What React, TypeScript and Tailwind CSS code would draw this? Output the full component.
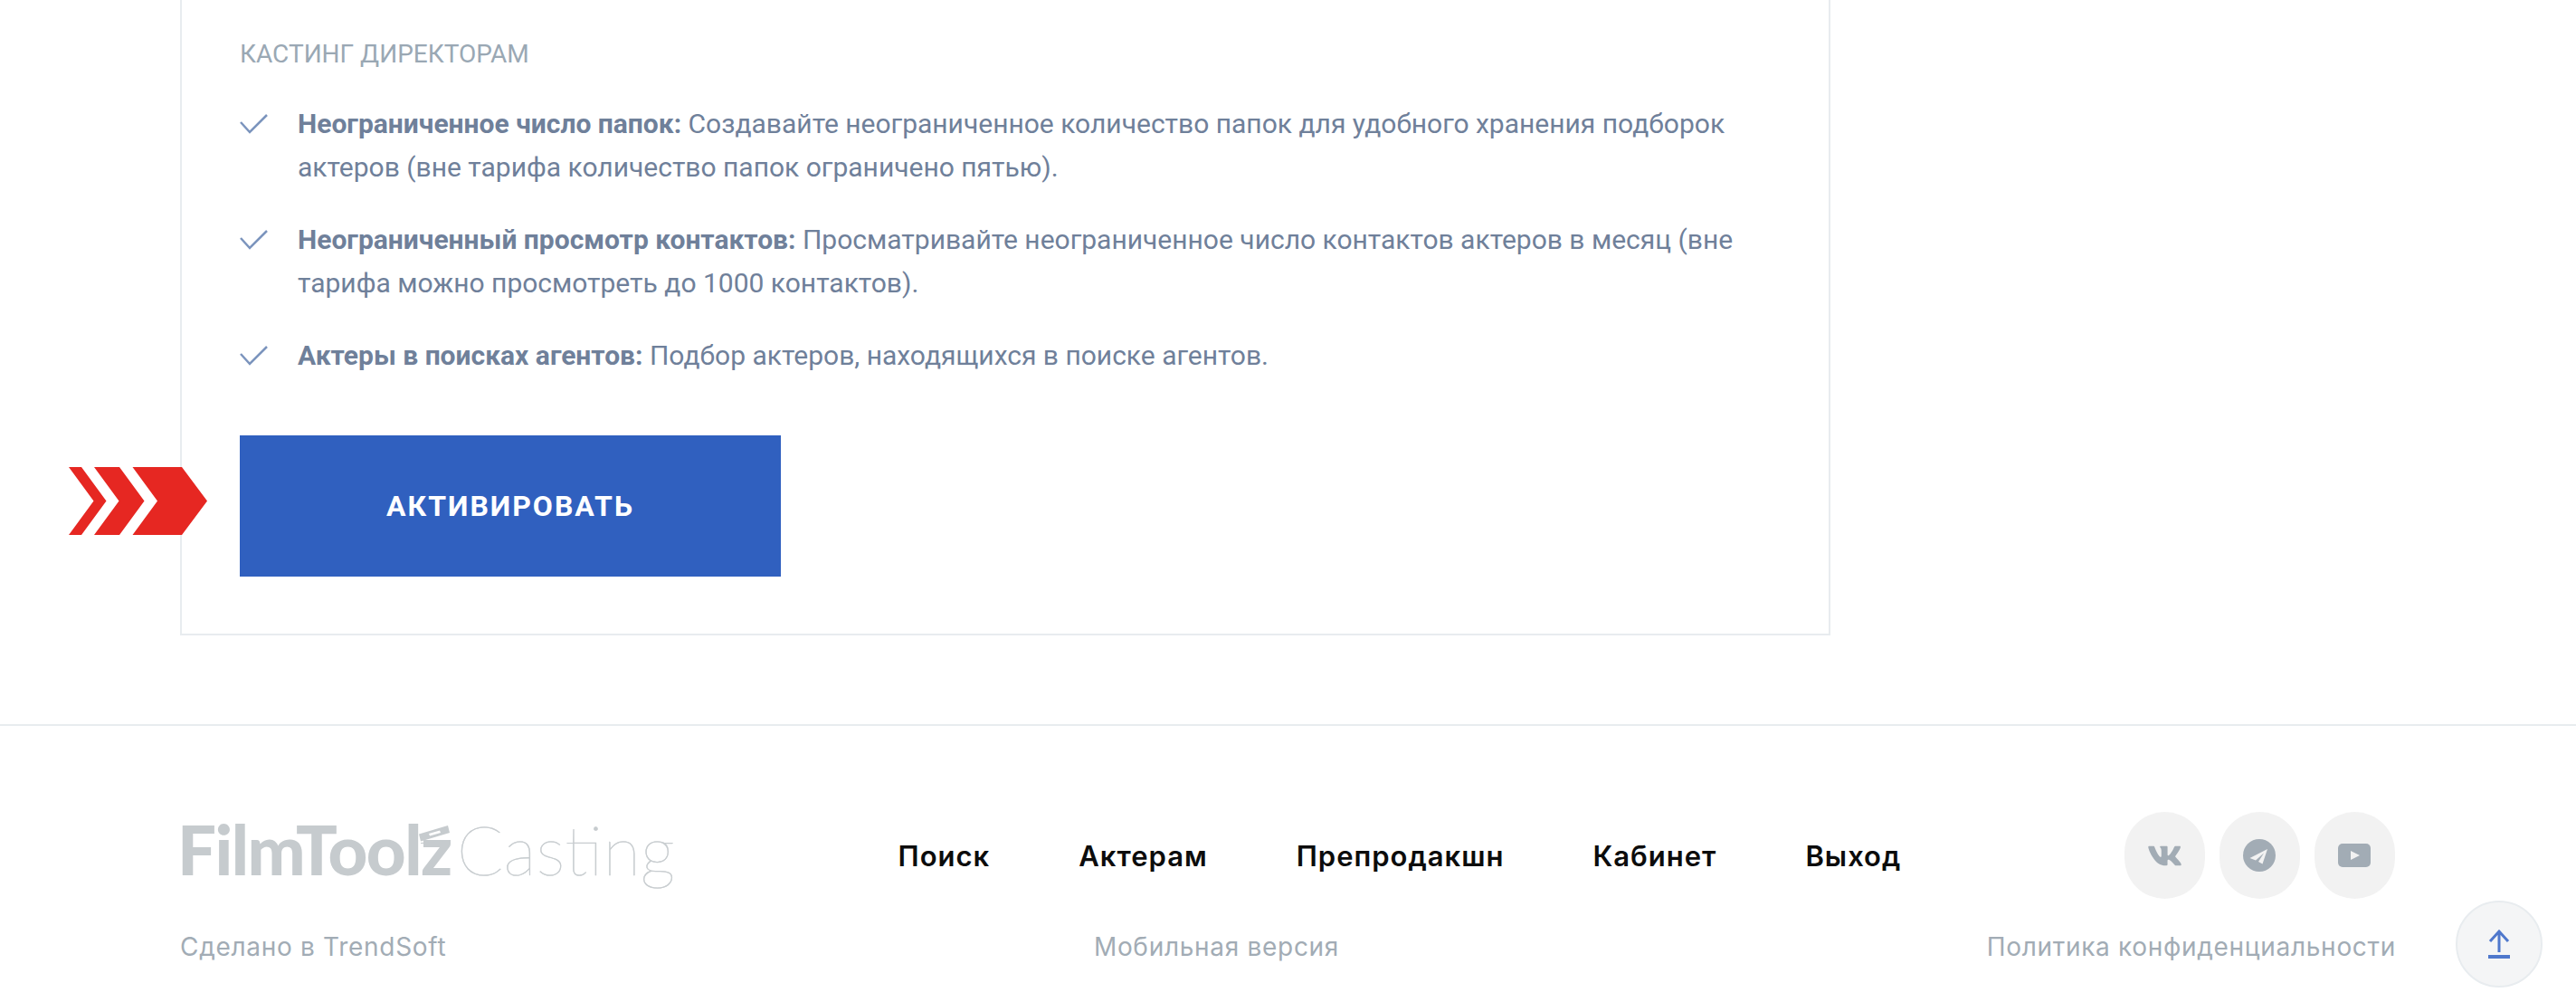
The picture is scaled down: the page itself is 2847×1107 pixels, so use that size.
import { FaVk } from "react-icons/fa";

const perks = [
  {
    title: "Неограниченное число папок:",
    text: " Создавайте неограниченное количество папок для удобного хранения подборок актеров (вне тарифа количество папок ограничено пятью).",
  },
  {
    title: "Неограниченный просмотр контактов:",
    text: " Просматривайте неограниченное число контактов актеров в месяц (вне тарифа можно просмотреть до 1000 контактов).",
  },
  {
    title: "Актеры в поисках агентов:",
    text: " Подбор актеров, находящихся в поиске агентов.",
  },
];

const navLinks = ["Поиск", "Актерам", "Препродакшн", "Кабинет", "Выход"];

function CheckMark() {
  return (
    <svg width="31" height="22" viewBox="0 0 31 22" fill="none" className="absolute left-[-64px] top-[13px]">
      <path d="M1 9L11 20L30 1" stroke="#7b94bd" strokeWidth="2.5" />
    </svg>
  );
}

function Chevrons() {
  return (
    <svg width="153" height="75" viewBox="0 0 153 75" className="absolute left-[-189px] top-[35px]">
      <path d="M0 0H14L41.5 37.5L14 75H0L27.5 37.5Z" fill="#e62722" />
      <path d="M28 0H56L83.5 37.5L56 75H28L55.5 37.5Z" fill="#e62722" />
      <path d="M70.5 0H125L153 37.5L125 75H70.5L98 37.5Z" fill="#e62722" />
    </svg>
  );
}

function Logo() {
  return (
    <div className="relative -mt-[14px] flex h-[72px] items-start text-[#c6cbce]">
      <span className="-ml-[3px] font-['Lato'] text-[76px] leading-[72px] font-black tracking-[-1.5px]">FilmToolz</span>
      <span className="ml-[6px] font-['Lato'] text-[76px] leading-[72px] font-thin [-webkit-text-stroke:0.5px_#c6cbce]">
        Casting
      </span>
      {/* хлопушка над z */}
      <svg width="38" height="20" viewBox="0 0 38 20" className="absolute left-[264px] top-[10px]">
        <path d="M0 9.5L32 0L34 8L2 17.5Z" fill="#c6cbce" />
        <path d="M11 9L23 5.5L24 8L12 11.5Z" fill="#ffffff" />
        <path d="M2 19L34 17V20H2Z" fill="#c6cbce" />
      </svg>
    </div>
  );
}

function Social({ children }: { children: React.ReactNode }) {
  return (
    <div className="flex h-[96px] w-[89px] items-center justify-center rounded-full bg-[#f2f2f2] text-[#a2acb5]">
      {children}
    </div>
  );
}

export default function App() {
  return (
    <div className="h-[1107px] overflow-hidden bg-white font-['Roboto',sans-serif]">
      <div className="px-[199px]">
        <div className="h-[702px] w-[1824px] border-x-2 border-b-2 border-[#e8ecef] px-[64px] pt-[44px]">
          <h3 className="text-[28px] leading-[32px] text-[#9aa8b4]">КАСТИНГ ДИРЕКТОРАМ</h3>
          <ul className="mt-[37px] pl-[64px]">
            {perks.map((p) => (
              <li key={p.title} className="relative mb-[32px] text-[30px] leading-[48px] text-[#6f809a]">
                <CheckMark />
                <b className="font-bold">{p.title}</b>
                {p.text}
              </li>
            ))}
          </ul>
          <div className="relative mt-[64px]">
            <Chevrons />
            <button className="h-[156px] w-[598px] bg-[#3060bf] text-[32px] font-bold tracking-[2px] text-white">
              АКТИВИРОВАТЬ
            </button>
          </div>
        </div>
      </div>

      <footer className="relative mt-[98px] border-t-2 border-[#e8ecef] px-[199px] pt-[95px] font-['Inter',sans-serif]">
        <div className="flex h-[96px] items-center justify-between">
          <Logo />
          <nav className="mt-[2px] flex gap-[98px] text-[31px] font-semibold tracking-[1px] text-[#0c0c0c]">
            {navLinks.map((l) => (
              <a key={l}>{l}</a>
            ))}
          </nav>
          <div className="mr-[1px] flex gap-[16px]">
            <Social>
              <FaVk size={39} />
            </Social>
            <Social>
              <svg width="36" height="36" viewBox="0 0 36 36">
                <circle cx="18" cy="18" r="18" fill="currentColor" />
                <path d="M27 11L7.5 21L14 23.5L23 15.5L17 25L21.5 27.5Z" fill="#f2f2f2" />
              </svg>
            </Social>
            <Social>
              <svg width="36" height="26" viewBox="0 0 36 26">
                <rect width="36" height="26" rx="5" fill="currentColor" />
                <path d="M14 8L24 13L14 18Z" fill="#f2f2f2" />
              </svg>
            </Social>
          </div>
        </div>
        <div className="mt-[32px] flex justify-between text-[28px] tracking-[0.7px] text-[#a2acb5]">
          <span>Сделано в TrendSoft</span>
          <span>Мобильная версия</span>
          <span>Политика конфиденциальности</span>
        </div>
        <button className="absolute right-[37px] top-[193px] flex h-[96px] w-[96px] items-center justify-center rounded-full border-2 border-[#e8ecef] bg-[#f4f5f6]">
          <svg width="24" height="32" viewBox="0 0 24 32" fill="none" stroke="#4f78cc" strokeWidth="3">
            <path d="M12 25V2M2 13L12 2L22 13" />
            <path d="M0 30H24" strokeWidth="4" />
          </svg>
        </button>
      </footer>
    </div>
  );
}
